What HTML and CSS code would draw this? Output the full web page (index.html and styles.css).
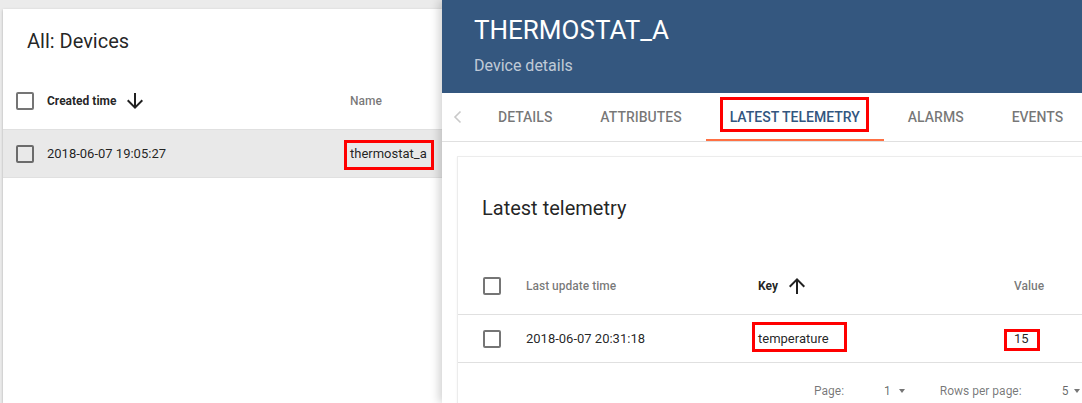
FILE: index.html
```html
<!DOCTYPE html>
<html lang="en">
<head>
<meta charset="utf-8">
<title>Devices</title>
<link rel="stylesheet" href="styles.css">
</head>
<body>
<div class="app">
  <section class="devices">
    <div class="list-card">
      <h1 class="list-title">All: Devices</h1>
      <div class="row head">
        <span class="cb"></span>
        <span class="cell l-time sorted">Created time
          <svg class="sort-icon" viewBox="0 0 24 24" width="24" height="24"><path d="M20 12l-1.41-1.41L13 16.17V4h-2v12.17l-5.58-5.59L4 12l8 8 8-8z"/></svg>
        </span>
        <span class="cell l-name">Name</span>
      </div>
      <div class="row data selected">
        <span class="cb"></span>
        <span class="cell l-time">2018-06-07 19:05:27</span>
        <span class="cell l-name"><span class="hl hl-name">thermostat_a</span></span>
      </div>
    </div>
  </section>

  <section class="details">
    <header class="details-head">
      <h2 class="details-title">THERMOSTAT_A</h2>
      <p class="details-sub">Device details</p>
    </header>
    <nav class="tabs">
      <span class="tab-prev">
        <svg viewBox="0 0 24 24" width="24" height="24"><polyline points="14.5,6.5 9,12 14.5,17.5" fill="none" stroke="#c9c9c9" stroke-width="1.6"/></svg>
      </span>
      <span class="tab">Details</span>
      <span class="tab">Attributes</span>
      <span class="tab active"><span class="hl hl-tab">Latest telemetry</span></span>
      <span class="tab">Alarms</span>
      <span class="tab">Events</span>
    </nav>
    <div class="tab-body">
      <div class="tele-card">
        <h3 class="tele-title">Latest telemetry</h3>
        <div class="row head">
          <span class="cb"></span>
          <span class="cell t-time">Last update time</span>
          <span class="cell t-key sorted">Key
            <svg class="sort-icon" viewBox="0 0 24 24" width="24" height="24"><path d="M4 12l1.41 1.41L11 7.83V20h2V7.83l5.58 5.59L20 12l-8-8-8 8z"/></svg>
          </span>
          <span class="cell t-val">Value</span>
        </div>
        <div class="row data">
          <span class="cb"></span>
          <span class="cell t-time">2018-06-07 20:31:18</span>
          <span class="cell t-key"><span class="hl hl-key">temperature</span></span>
          <span class="cell t-val"><span class="hl hl-val">15</span></span>
        </div>
        <div class="pager">
          <span class="pager-label">Page:</span>
          <span class="pager-select pager-page">1<i class="caret"></i></span>
          <span class="pager-label pager-rows">Rows per page:</span>
          <span class="pager-select pager-size">5<i class="caret"></i></span>
        </div>
      </div>
    </div>
  </section>
</div>
</body>
</html>
```
FILE: styles.css
```css
* { box-sizing: border-box; margin: 0; padding: 0; }

html, body {
  width: 1082px;
  height: 403px;
  overflow: hidden;
}

body {
  background: #ebebeb;
  font-family: Roboto, "Liberation Sans", sans-serif;
  color: rgba(0, 0, 0, 0.87);
}

.app {
  display: flex;
  height: 403px;
}

/* ---------- left list ---------- */
.devices {
  flex: 0 0 442px;
  display: flex;
  padding: 9px 0 0 3px;
}

.list-card {
  flex: 1;
  background: #fff;
  box-shadow: 0 1px 3px rgba(0, 0, 0, 0.2), 0 1px 1px rgba(0, 0, 0, 0.12);
}

.list-title {
  height: 64px;
  padding: 20px 0 0 24px;
  font-size: 20px;
  font-weight: 400;
  line-height: 24px;
}

.row {
  display: flex;
  align-items: center;
  border-bottom: 1px solid #e0e0e0;
}

.row.head { height: 57px; }
.row.data { height: 48px; }
.row.selected { background: #e9e9e9; }

.cb {
  flex: 0 0 18px;
  width: 18px;
  height: 18px;
  margin: 0 13px;
  border: 2px solid rgba(0, 0, 0, 0.54);
  border-radius: 2px;
}

.cell {
  display: flex;
  align-items: center;
  line-height: 16px;
  white-space: nowrap;
}

.head .cell {
  font-size: 12px;
  font-weight: 500;
  color: rgba(0, 0, 0, 0.54);
}

.head .cell.sorted {
  font-weight: 700;
  color: rgba(0, 0, 0, 0.87);
}

.data .cell {
  font-size: 13px;
  color: rgba(0, 0, 0, 0.87);
}

.sort-icon {
  fill: rgba(0, 0, 0, 0.87);
  margin-left: 7px;
}

.l-time { flex: 1; }
.l-name { flex: 0 0 92px; }

/* ---------- right details ---------- */
.details {
  flex: 1;
  min-width: 0;
  display: flex;
  flex-direction: column;
  background: #fff;
  position: relative;
  z-index: 1;
  box-shadow: -3px 0 9px rgba(0, 0, 0, 0.18);
}

.details-head {
  height: 93px;
  padding: 14px 32px 0;
  background: #34577f;
  color: #fff;
}

.details-title {
  font-size: 26px;
  font-weight: 400;
  line-height: 32px;
}

.details-sub {
  margin-top: 10px;
  font-size: 16px;
  line-height: 20px;
  color: rgba(255, 255, 255, 0.7);
}

.tabs {
  display: flex;
  height: 49px;
  border-bottom: 1px solid #e0e0e0;
}

.tab-prev {
  flex: 0 0 32px;
  display: flex;
  align-items: center;
  justify-content: center;
}

.tab {
  position: relative;
  display: flex;
  align-items: center;
  padding: 0 24px;
  font-size: 14px;
  font-weight: 500;
  line-height: 16px;
  text-transform: uppercase;
  color: rgba(0, 0, 0, 0.54);
  white-space: nowrap;
}

.tab.active { color: #33567f; }

.tab.active::after {
  content: "";
  position: absolute;
  left: 0;
  right: 0;
  bottom: 0;
  height: 2px;
  background: #ff7043;
}

.tab-body {
  flex: 1;
  padding: 14px 0 0 15px;
  overflow: hidden;
}

.tele-card {
  height: 300px;
  background: #fff;
  border: 1px solid #ececec;
  border-right: 0;
  box-shadow: 0 1px 2px rgba(0, 0, 0, 0.06);
}

.tele-title {
  margin: 39px 0 38px 24px;
  font-size: 20px;
  font-weight: 400;
  line-height: 24px;
}

.tele-card .cb { margin: 0 25px; }

.t-time { flex: 0 0 232px; }
.t-key { flex: 0 0 256px; }
.t-val { flex: 1; }

.pager {
  display: flex;
  align-items: center;
  height: 56px;
  padding-left: 356px;
  font-size: 12px;
  line-height: 16px;
  color: rgba(0, 0, 0, 0.54);
  white-space: nowrap;
}

.pager-select {
  display: flex;
  align-items: center;
  margin-left: 40px;
  color: rgba(0, 0, 0, 0.6);
}

.pager-rows { margin-left: 35px; }

.caret {
  display: inline-block;
  width: 0;
  height: 0;
  margin-left: 8px;
  border-left: 3.5px solid transparent;
  border-right: 3.5px solid transparent;
  border-top: 4px solid rgba(0, 0, 0, 0.54);
}

.pager-size .caret { margin-left: 6px; }

/* ---------- annotation boxes ---------- */
.hl {
  position: relative;
  display: inline-block;
  line-height: 16px;
}

.hl::before {
  content: "";
  position: absolute;
  border: 3px solid #ff0000;
}

.hl-name::before { top: -6px; bottom: -8px; left: -6px; right: -7px; }
.hl-tab::before  { top: -12px; bottom: -7px; left: -10px; right: -9px; }
.hl-key::before  { top: -9px; bottom: -5px; left: -6px; right: -18px; }
.hl-val::before  { top: -2px; bottom: -4px; left: -10px; right: -11px; }
```
